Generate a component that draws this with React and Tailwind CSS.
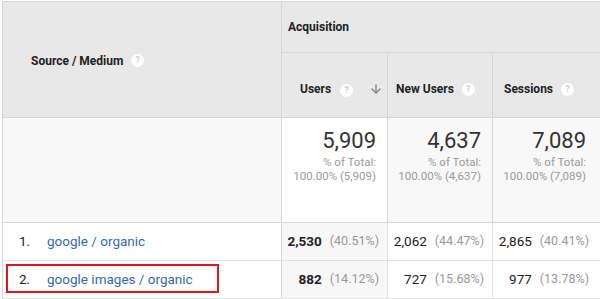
import { ArrowDown } from "lucide-react";

function Help() {
  return (
    <span className="inline-flex items-center justify-center w-[13px] h-[13px] rounded-full bg-white text-[9px] font-bold text-[#cfcfcf] leading-none">
      ?
    </span>
  );
}

const totals = [
  { value: "5,909", sub: "100.00% (5,909)", bg: "bg-white" },
  { value: "4,637", sub: "100.00% (4,637)", bg: "bg-[#f8f8f8]" },
  { value: "7,089", sub: "100.00% (7,089)", bg: "bg-[#f8f8f8]" },
];

const rows = [
  {
    n: "1.",
    label: "google / organic",
    cells: [
      ["2,530", "(40.51%)"],
      ["2,062", "(44.47%)"],
      ["2,865", "(40.41%)"],
    ],
  },
  {
    n: "2.",
    label: "google images / organic",
    boxed: true,
    cells: [
      ["882", "(14.12%)"],
      ["727", "(15.68%)"],
      ["977", "(13.78%)"],
    ],
  },
];

const widths = ["w-[106px]", "w-[105px]", "w-[104px]"];

export default function App() {
  return (
    <div className="w-[600px] h-[299px] overflow-hidden bg-white pt-px pl-[2px] font-['Roboto',sans-serif] text-[#222]">
      <div className="w-[640px] border-t border-l border-[#d6d6d6]">
        {/* Header */}
        <div className="flex h-[116px] bg-[#e8e8e8] border-b border-[#d6d6d6]">
          <div className="w-[279px] shrink-0 border-r border-[#d6d6d6] flex items-center gap-[8px] pl-[28px] pt-[2px]">
            <span className="text-[12px] font-bold">Source / Medium</span>
            <Help />
          </div>
          <div className="flex-1 flex flex-col">
            <div className="h-[51px] border-b border-[#d6d6d6] flex items-center pl-[6px] text-[12px] font-bold">
              Acquisition
            </div>
            <div className="flex flex-1">
              <div className="w-[106px] shrink-0 border-r border-[#d6d6d6] flex items-center pl-[18px] pr-[4px] pt-[8px] text-[12px] font-bold">
                <span>Users</span>
                <span className="ml-[9px]"><Help /></span>
                <ArrowDown className="ml-auto w-[14px] h-[14px] text-[#888]" strokeWidth={2.5} />
              </div>
              <div className="w-[105px] shrink-0 border-r border-[#d6d6d6] flex items-center gap-[8px] pl-[8px] pt-[8px] text-[12px] font-bold">
                <span>New Users</span>
                <Help />
              </div>
              <div className="w-[120px] shrink-0 flex items-center gap-[8px] pl-[11px] pt-[8px] text-[12px] font-bold">
                <span>Sessions</span>
                <Help />
              </div>
            </div>
          </div>
        </div>

        {/* Totals */}
        <div className="flex h-[105px] border-b border-[#d6d6d6]">
          <div className="w-[279px] shrink-0 bg-[#f8f8f8] border-r border-[#d6d6d6]" />
          {totals.map((t, i) => (
            <div
              key={t.value}
              className={`${widths[i]} shrink-0 ${t.bg} ${i < 2 ? "border-r border-[#d6d6d6]" : ""} flex flex-col items-end pr-[11px] pt-[10px]`}
            >
              <span className="text-[22px] leading-[26px] text-[#333]">{t.value}</span>
              <span className="text-[11.5px] leading-[14px] text-[#9a9a9a] mt-[1px]">% of Total:</span>
              <span className="text-[11.5px] leading-[14px] text-[#9a9a9a] whitespace-nowrap">{t.sub}</span>
            </div>
          ))}
          <div className="flex-1 bg-[#f8f8f8]" />
        </div>

        {/* Rows */}
        {rows.map((r) => (
          <div key={r.n} className="relative flex h-[38px] border-b border-[#e0e0e0]">
            <div className="w-[279px] shrink-0 border-r border-[#d6d6d6] flex items-center pl-[16px] text-[13.5px]">
              <span className="w-[28px]">{r.n}</span>
              <span className="text-[#3568ad]">{r.label}</span>
            </div>
            {r.cells.map(([v, p], i) => (
              <div
                key={i}
                className={`${widths[i]} shrink-0 ${i === 0 ? "bg-[#f7f7f7]" : ""} ${i < 2 ? "border-r border-[#e0e0e0]" : ""} flex items-center justify-end pr-[8px] gap-[8px]`}
              >
                <span className={`text-[13.5px] ${i === 0 ? "font-bold" : ""}`}>{v}</span>
                <span className="text-[12.5px] text-[#999]">{p}</span>
              </div>
            ))}
            {r.boxed && (
              <div className="absolute left-[3px] top-[3px] w-[213px] h-[29px] border-2 border-[#e3141b]" />
            )}
          </div>
        ))}
      </div>
    </div>
  );
}
